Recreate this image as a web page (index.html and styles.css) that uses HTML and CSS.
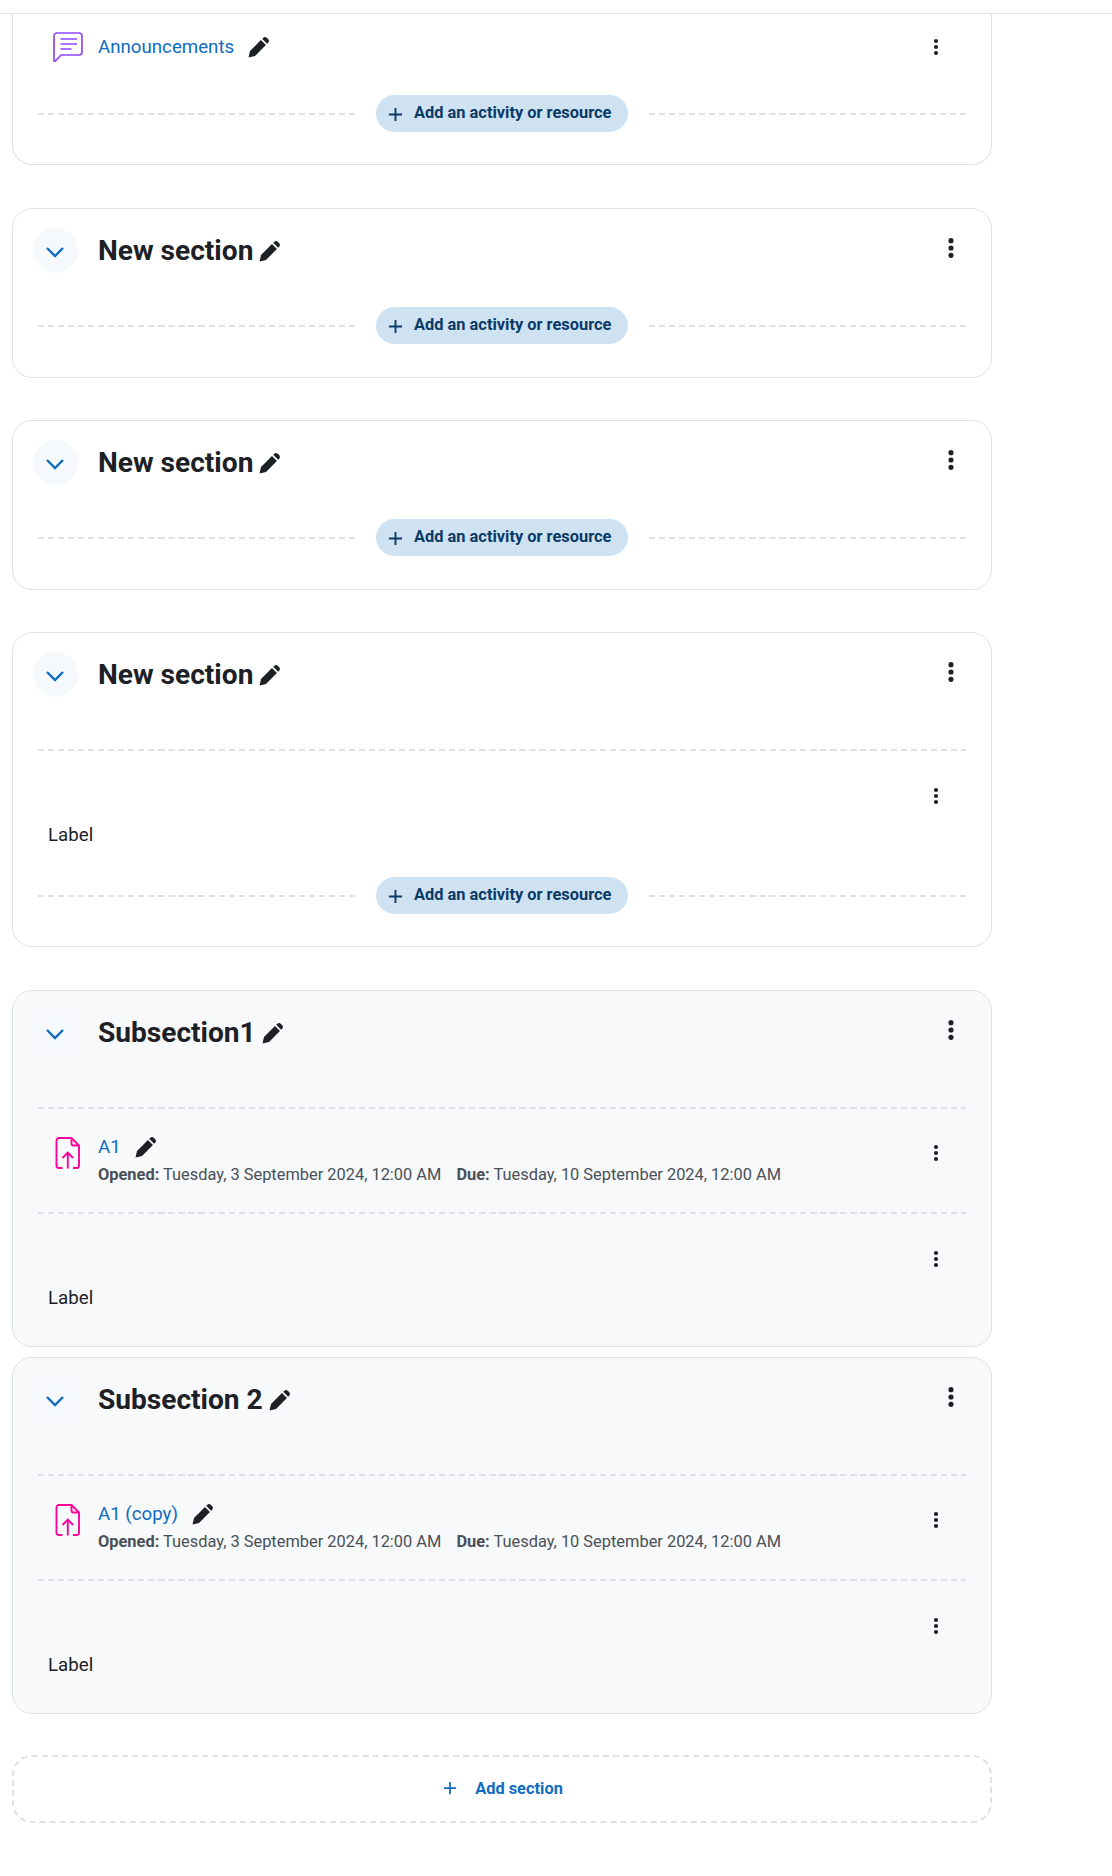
FILE: index.html
```html
<!DOCTYPE html>
<html lang="en">
<head>
<meta charset="utf-8">
<title>Course sections</title>
<link rel="stylesheet" href="styles.css">
</head>
<body>
<svg class="defs" width="0" height="0" aria-hidden="true">
  <defs>
    <symbol id="pencil" viewBox="0 0 24 24">
      <path d="M.6 23.4 2.3 16 14.8 3.5 20.500 9.200 8 21.700Z"/>
      <path d="M16.200 2.100 17.300 1c1.200-1.200 3.100-1.200 4.300 0L23 2.400c1.200 1.200 1.200 3.100 0 4.300L21.900 7.800Z"/>
    </symbol>
    <symbol id="kebab" viewBox="0 0 24 24">
      <circle cx="12" cy="4" r="2.800"/><circle cx="12" cy="12" r="2.800"/><circle cx="12" cy="20" r="2.800"/>
    </symbol>
    <symbol id="chevron" viewBox="0 0 20 12">
      <path d="M2 2 10 10 18 2" fill="none" stroke="currentColor" stroke-width="2.400"/>
    </symbol>
    <symbol id="plus" viewBox="0 0 16 16">
      <path d="M8 1V15M1 8H15" fill="none" stroke="currentColor" stroke-width="2"/>
    </symbol>
    <symbol id="assign" viewBox="0 0 30 32">
      <path d="M9.500 31H6C4.200 31 3.500 30 3.500 28.500V4C3.500 2.200 4.300 1 6 1H18.500L26 8.500V28.500C26 30 25.200 31 23.600 31H20M18.500 1V6.500C18.500 7.800 19.200 8.500 20.500 8.500H26M14.800 31.500V16M9.500 21 14.800 15.600 20.100 21" fill="none" stroke="currentColor" stroke-width="1.900"/>
    </symbol>
    <symbol id="forum" viewBox="0 0 30 30">
      <path d="M1 29V4C1 2 2.200 1 4 1H26C28 1 29 2 29 4V20C29 22 28 23 26 23H8L2 29.300C1.500 29.700 1 29.500 1 29Z" fill="none" stroke="currentColor" stroke-width="1.700"/>
      <path d="M7.500 7H24M7.500 12H24M7.500 17H18.500" fill="none" stroke="currentColor" stroke-width="1.700"/>
    </symbol>
  </defs>
</svg>

<div class="topbar"></div>

<main class="course">
  <section class="card card-first">
    <div class="activity activity-first">
      <svg class="modicon forum"><use href="#forum"/></svg>
      <a class="name" href="#">Announcements</a>
      <svg class="pencil pencil-name"><use href="#pencil"/></svg>
      <svg class="kebab-sm"><use href="#kebab"/></svg>
    </div>
    <div class="add-row add-first">
      <span class="dash"></span>
      <a class="add-btn" href="#"><svg class="plus"><use href="#plus"/></svg><span class="add-text">Add an activity or resource</span></a>
      <span class="dash"></span>
    </div>
  </section>

  <section class="card">
    <header class="head">
      <span class="toggle"><svg class="chev"><use href="#chevron"/></svg></span>
      <h3 class="title">New section</h3>
      <svg class="pencil"><use href="#pencil"/></svg>
      <svg class="kebab"><use href="#kebab"/></svg>
    </header>
    <div class="add-row">
      <span class="dash"></span>
      <a class="add-btn" href="#"><svg class="plus"><use href="#plus"/></svg><span class="add-text">Add an activity or resource</span></a>
      <span class="dash"></span>
    </div>
  </section>

  <section class="card">
    <header class="head">
      <span class="toggle"><svg class="chev"><use href="#chevron"/></svg></span>
      <h3 class="title">New section</h3>
      <svg class="pencil"><use href="#pencil"/></svg>
      <svg class="kebab"><use href="#kebab"/></svg>
    </header>
    <div class="add-row">
      <span class="dash"></span>
      <a class="add-btn" href="#"><svg class="plus"><use href="#plus"/></svg><span class="add-text">Add an activity or resource</span></a>
      <span class="dash"></span>
    </div>
  </section>

  <section class="card card-last">
    <header class="head">
      <span class="toggle"><svg class="chev"><use href="#chevron"/></svg></span>
      <h3 class="title">New section</h3>
      <svg class="pencil"><use href="#pencil"/></svg>
      <svg class="kebab"><use href="#kebab"/></svg>
    </header>
    <span class="dash dash-full"></span>
    <div class="label-block">
      <svg class="kebab-sm"><use href="#kebab"/></svg>
      <p class="label">Label</p>
    </div>
    <div class="add-row add-after-label">
      <span class="dash"></span>
      <a class="add-btn" href="#"><svg class="plus"><use href="#plus"/></svg><span class="add-text">Add an activity or resource</span></a>
      <span class="dash"></span>
    </div>
  </section>

  <section class="card sub">
    <header class="head">
      <span class="toggle"><svg class="chev"><use href="#chevron"/></svg></span>
      <h3 class="title">Subsection1</h3>
      <svg class="pencil"><use href="#pencil"/></svg>
      <svg class="kebab"><use href="#kebab"/></svg>
    </header>
    <span class="dash dash-full"></span>
    <div class="activity">
      <svg class="modicon assign"><use href="#assign"/></svg>
      <div class="body">
        <div class="name-row"><a class="name" href="#">A1</a><svg class="pencil pencil-name"><use href="#pencil"/></svg></div>
        <p class="dates"><b>Opened:</b> Tuesday, 3 September 2024, 12:00 AM <b class="due">Due:</b> Tuesday, 10 September 2024, 12:00 AM</p>
      </div>
      <svg class="kebab-sm"><use href="#kebab"/></svg>
    </div>
    <span class="dash dash-full dash-tail"></span>
    <div class="label-block">
      <svg class="kebab-sm"><use href="#kebab"/></svg>
      <p class="label">Label</p>
    </div>
  </section>

  <section class="card sub sub-next">
    <header class="head">
      <span class="toggle"><svg class="chev"><use href="#chevron"/></svg></span>
      <h3 class="title">Subsection 2</h3>
      <svg class="pencil"><use href="#pencil"/></svg>
      <svg class="kebab"><use href="#kebab"/></svg>
    </header>
    <span class="dash dash-full"></span>
    <div class="activity">
      <svg class="modicon assign"><use href="#assign"/></svg>
      <div class="body">
        <div class="name-row"><a class="name" href="#">A1 (copy)</a><svg class="pencil pencil-name"><use href="#pencil"/></svg></div>
        <p class="dates"><b>Opened:</b> Tuesday, 3 September 2024, 12:00 AM <b class="due">Due:</b> Tuesday, 10 September 2024, 12:00 AM</p>
      </div>
      <svg class="kebab-sm"><use href="#kebab"/></svg>
    </div>
    <span class="dash dash-full dash-tail"></span>
    <div class="label-block">
      <svg class="kebab-sm"><use href="#kebab"/></svg>
      <p class="label">Label</p>
    </div>
  </section>

  <a class="add-section" href="#"><svg class="plus-sec"><use href="#plus"/></svg><span class="sec-text">Add section</span></a>
</main>
</body>
</html>
```

FILE: styles.css
```css
* { box-sizing: border-box; }
html, body { margin: 0; padding: 0; background: #fff; }
body { font-family: Roboto, "Liberation Sans", sans-serif; color: #1d2125; height: 1876px; overflow: hidden; }
a { text-decoration: none; color: #0f6cbf; }
.defs { position: absolute; }

.topbar { height: 14px; border-bottom: 1px solid #dee2e6; }

.course { width: 980px; margin-left: 12px; display: flex; flex-direction: column; }

.card { border: 1px solid #dee2e6; border-radius: 20px; padding: 19px 25px 33px; margin-bottom: 42px; background: #fff; }
.card-first { border-top: 0; border-radius: 0 0 20px 20px; padding-top: 18px; padding-bottom: 32px; margin-bottom: 43px; }
.card-last { padding-bottom: 32px; margin-bottom: 43px; }
.sub { background: #f8f9fb; padding-bottom: 36px; margin-bottom: 10px; }
.sub-next { margin-bottom: 41px; }

.head { display: flex; align-items: center; height: 45px; margin-left: -5px; margin-bottom: 34px; }
.head + .dash-full { margin-top: 52px; }
.toggle { width: 45px; height: 45px; border-radius: 50%; background: #f5f9fc; display: flex; align-items: center; justify-content: center; flex: none; margin-right: 20px; }
.sub .toggle { background: #f6f9fc; }
.chev { width: 20px; height: 12px; margin-top: 3px; margin-right: 1px; color: #0f6cbf; }
.title { margin: 0; font-size: 28.100px; line-height: 45px; font-weight: 700; }
.pencil { width: 21px; height: 21px; margin-left: 6px; margin-top: 2px; fill: #1d2125; flex: none; }
.kebab { width: 22px; height: 22px; fill: #1d2125; margin-left: auto; margin-right: 4px; margin-top: -5px; flex: none; }
.kebab-sm { width: 18px; height: 18px; fill: #1d2125; margin-left: auto; margin-right: 21px; flex: none; }

.dash { display: block; flex: 1; height: 2px; background: repeating-linear-gradient(90deg, #dee2e6 0 6.200px, transparent 6.200px 10.030px); }
.dash-full { width: 100%; }

.add-row { display: flex; align-items: center; gap: 21px; height: 37px; }
.add-first { margin-top: 33px; }
.add-after-label { margin-top: 30px; }
.add-btn { display: flex; align-items: center; height: 37px; width: 252px; padding-left: 12px; border-radius: 19px; background: #cfe2f2; color: #0a3a66; font-size: 16.400px; font-weight: 700; white-space: nowrap; flex: none; }
.add-text { margin-top: -2px; }
.plus { width: 15px; height: 15px; margin-right: 11px; margin-top: 1px; flex: none; }

.activity { display: flex; align-items: flex-start; padding: 26px 0 26px 15px; }
.activity-first { padding: 0 0 0 15px; align-items: center; height: 30px; }
.modicon { width: 30px; height: 30px; flex: none; margin-right: 15px; }
.forum { color: #8f47ff; }
.assign { color: #f7049c; height: 32px; margin-top: 2px; }
.name { font-size: 18.700px; line-height: 24px; }
.pencil-name { margin-left: 14px; margin-top: 0; }
.body { display: flex; flex-direction: column; }
.name-row { display: flex; align-items: center; height: 24px; }
.dates { margin: 5px 0 0; font-size: 16.400px; line-height: 22px; color: #495057; white-space: nowrap; }
.due { margin-left: 11px; }
.activity > .kebab-sm { margin-top: 9px; }
.activity-first > .kebab-sm { margin-top: 0; }

.label-block { display: flex; flex-direction: column; padding-top: 36px; }
.label { margin: 18px 0 0 10px; font-size: 18.700px; line-height: 24px; }

.add-section { display: flex; align-items: center; justify-content: center; height: 68px; padding-left: 2px; padding-bottom: 2px; border: 2px dashed #dee2e6; border-radius: 20px; font-size: 16.400px; font-weight: 700; }
.plus-sec { width: 14px; height: 14px; margin-right: 18px; }
```
